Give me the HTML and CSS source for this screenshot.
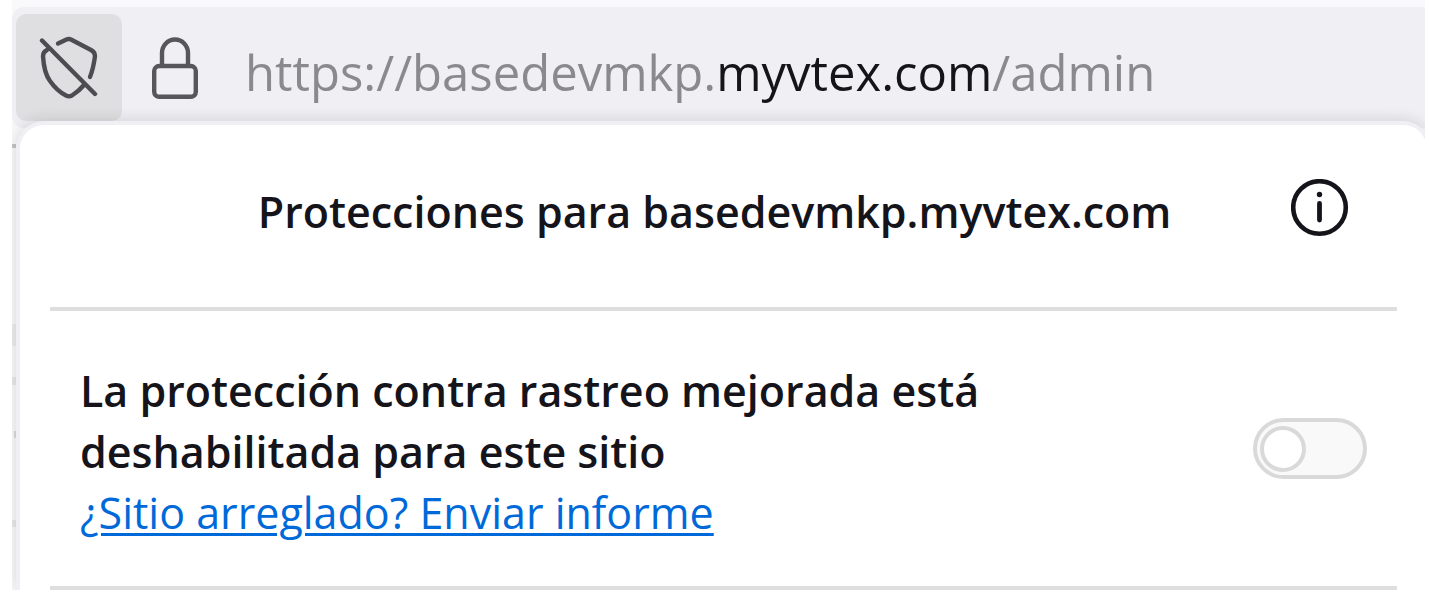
FILE: index.html
```html
<!DOCTYPE html>
<html lang="es">
<head>
<meta charset="utf-8">
<meta name="viewport" content="width=device-width, initial-scale=1">
<title>Protecciones para basedevmkp.myvtex.com</title>
<link rel="stylesheet" href="styles.css">
</head>
<body>
<div class="browser">
  <header class="toolbar">
    <div class="urlbar">
      <button class="shield-button" type="button" aria-label="Protección contra rastreo">
        <svg class="icon-shield" viewBox="0 0 60 64" fill="none" stroke="#4d4d51" stroke-width="4.4" stroke-linecap="round" stroke-linejoin="round">
          <path d="M3 4.500L56 58"/>
          <path d="M19 7.500L27.500 3.500Q30 2.500 32 3.500L52 14Q56 16 56 20Q54.500 32 51 41"/>
          <path d="M8 14Q4 16 4 20Q5 37 11 45Q18 55 27 59.500Q30 61 33 59.500Q40 55 45 49"/>
        </svg>
      </button>
      <button class="lock-button" type="button" aria-label="Información del sitio">
        <svg class="icon-lock" viewBox="0 0 46 62" fill="none" stroke="#56565b" stroke-width="4.4">
          <path d="M10 28V16A13 13.500 0 0 1 36 16V28"/>
          <rect x="2.200" y="29" width="41.600" height="30.800" rx="5"/>
        </svg>
      </button>
      <div class="url">https://basedevmkp.<span class="domain">myvtex.com</span>/admin</div>
    </div>
  </header>
  <main class="panel">
    <div class="panel-header">
      <h1 class="title">Protecciones para basedevmkp.myvtex.com</h1>
      <button class="info-button" type="button" aria-label="Información">
        <svg class="icon-info" viewBox="0 0 58 58" fill="none" stroke="#15141a" stroke-linecap="round">
          <circle cx="28.500" cy="28.500" r="26.300" stroke-width="4.600"/>
          <path d="M28.500 24.500V41" stroke-width="4.800"/>
          <circle cx="28.500" cy="15.500" r="2.700" fill="#15141a" stroke="none"/>
        </svg>
      </button>
    </div>
    <hr class="divider">
    <section class="tracking">
      <div class="tracking-text">
        <label class="status" for="tracking-toggle">La protección contra rastreo mejorada está deshabilitada para este sitio</label>
        <a class="report" href="#">¿Sitio arreglado? Enviar informe</a>
      </div>
      <input class="toggle" id="tracking-toggle" type="checkbox" role="switch">
    </section>
    <hr class="divider">
  </main>
</div>
</body>
</html>
```
FILE: styles.css
```css
* {
  box-sizing: border-box;
}

body {
  margin: 0;
  background: #fff;
  color: #15141a;
  font-family: "Open Sans", "Noto Sans", sans-serif;
}

button {
  border: 0;
  padding: 0;
  background: none;
}

svg {
  display: block;
}

/* The marks at the left edge are the page that shows behind the panel. */
.browser {
  margin: 0 4px 4px 12px;
  overflow: hidden;
  background:
    linear-gradient(#c4c4c6, #c4c4c6) 0 144px / 4px 4px no-repeat,
    linear-gradient(#ececee, #ececee) 0 324px / 4px 22px no-repeat,
    linear-gradient(#e8e8ea, #e8e8ea) 0 377px / 4px 8px no-repeat,
    linear-gradient(#dadadc, #dadadc) 2px 431px / 2px 7px no-repeat,
    linear-gradient(#e8e8ea, #e8e8ea) 0 520px / 4px 7px no-repeat,
    #f9f9fb;
}

.toolbar {
  padding-top: 7px;
}

.urlbar {
  display: flex;
  align-items: center;
  padding: 7px 4px;
  border-radius: 12px 0 0 12px;
  background: #f0f0f4;
}

.shield-button {
  display: grid;
  place-items: center;
  width: 106px;
  height: 107px;
  border-radius: 10px;
  background: #dfdfe1;
}

.icon-shield {
  width: 60px;
  height: 64px;
}

.lock-button {
  margin-left: 30px;
}

.icon-lock {
  width: 46px;
  height: 62px;
}

.url {
  margin-left: 47px;
  padding-top: 8px;
  color: #8a8a8e;
  font-size: 49px;
  line-height: 68px;
  white-space: nowrap;
}

.domain {
  color: #15141a;
}

.panel {
  position: relative;
  margin: -7px -6px 0 4px;
  padding: 0 30px;
  border: solid #f0f0f4;
  border-width: 4px 4px 0;
  border-radius: 28px 28px 0 0;
  background: #fff;
  box-shadow: 0 0 16px rgba(0, 0, 0, 0.14);
}

.panel-header {
  display: grid;
  grid-template-columns: 40px 1fr 58px;
  align-items: center;
  padding: 54px 48px 66px;
}

.title {
  grid-column: 2;
  margin: 0;
  padding-top: 4px;
  font-size: 43px;
  font-weight: 600;
  line-height: 58px;
  text-align: center;
  white-space: nowrap;
}

.info-button {
  align-self: start;
}

.icon-info {
  width: 58px;
  height: 58px;
}

.divider {
  height: 4px;
  margin: 0;
  border: 0;
  background: #dedede;
}

.tracking {
  display: flex;
  align-items: center;
  justify-content: space-between;
  gap: 32px;
  padding: 46px 30px;
}

.tracking-text {
  flex: 0 1 920px;
  margin: 3px 0 -3px;
  font-size: 43px;
  line-height: 61px;
}

.status {
  display: block;
  font-weight: 600;
}

.report {
  color: #0069d9;
  text-decoration-thickness: 3px;
  text-underline-offset: 4px;
}

.toggle {
  appearance: none;
  display: flex;
  align-items: center;
  flex: none;
  width: 114px;
  height: 61px;
  margin: 0;
  padding: 3px;
  border: 4px solid #d9d9d9;
  border-radius: 31px;
  background: #f9f9f9;
}

.toggle::before {
  content: "";
  width: 46px;
  height: 46px;
  border: 4px solid #d9d9d9;
  border-radius: 50%;
  background: #fff;
  box-sizing: border-box;
}

.toggle:checked {
  justify-content: flex-end;
}
```
